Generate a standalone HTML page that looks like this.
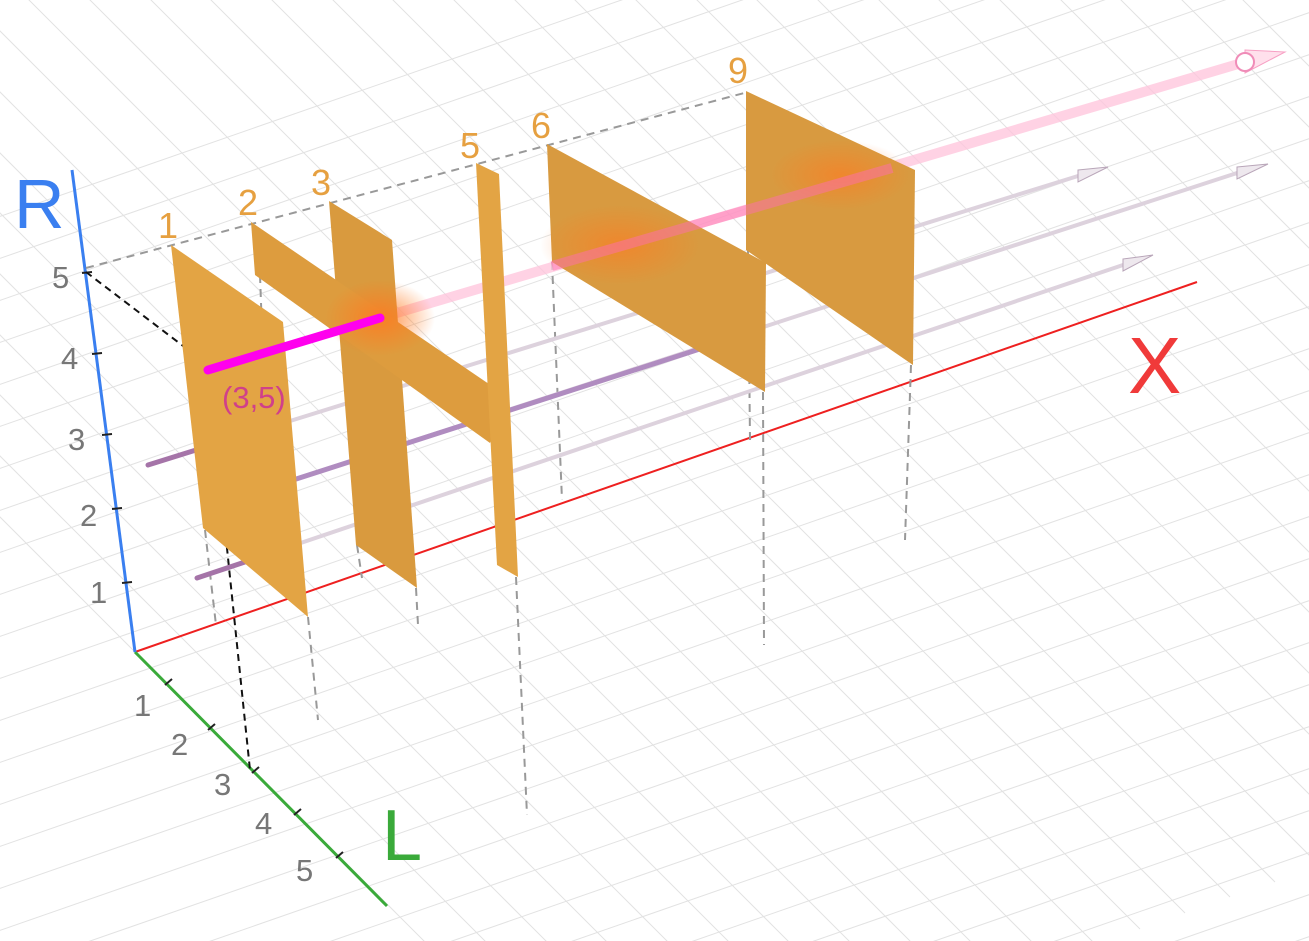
<!DOCTYPE html>
<html><head><style>html,body{margin:0;padding:0;background:#fff;overflow:hidden;width:1309px;height:941px}svg{display:block}</style></head>
<body>
<svg width="1309" height="941" viewBox="0 0 1309 941" xmlns="http://www.w3.org/2000/svg" font-family="'Liberation Sans', sans-serif">
<defs>
<radialGradient id="glow"><stop offset="0" stop-color="#ff7a20" stop-opacity="0.85"/><stop offset="1" stop-color="#ff7a20" stop-opacity="0"/></radialGradient>
</defs>
<rect width="1309" height="941" fill="#fff"/>
<g stroke="#e2e2e2" stroke-width="1" fill="none">
<path d="
M-200,580 L1400,23 M-200,622 L1400,65 M-200,664 L1400,107 M-200,706 L1400,149 M-200,748 L1400,191 M-200,790 L1400,233 M-200,832 L1400,275 M-200,874 L1400,317 M-200,916 L1400,359 M-200,958 L1400,401 M-200,1000 L1400,443 M-200,1042 L1400,485 M-200,1084 L1400,527 M-200,1126 L1400,569 M-200,1168 L1400,611 M-200,1210 L1400,653 M-200,1252 L1400,695 M-200,1294 L1400,737 M-200,1336 L1400,779 M-200,1378 L1400,821 M-200,1420 L1400,863 M-200,1462 L1400,905 M-200,1504 L1400,947
M-200,538 L1400,-19 M-200,496 L1400,-61 M-200,454 L1400,-103 M-200,412 L1400,-145 M-200,370 L1400,-187 M-200,328 L1400,-229 M-200,286 L1400,-271
"/>
<path d="
M-600,-83 L600,1117 M-555,-99 L645,1101 M-510,-115 L690,1085 M-465,-130 L735,1070 M-420,-146 L780,1054 M-375,-162 L825,1038 M-330,-177 L870,1023 M-285,-193 L915,1007 M-240,-209 L960,991 M-195,-224 L1005,976 M-150,-240 L1050,960 M-105,-256 L1095,944 M-60,-271 L1140,929 M-15,-287 L1185,913 M30,-303 L1230,897 M75,-318 L1275,882 M120,-334 L1320,866 M165,-350 L1365,850 M210,-365 L1410,835 M255,-381 L1455,819 M300,-397 L1500,803 M345,-412 L1545,788 M390,-428 L1590,772 M435,-444 L1635,756 M480,-459 L1680,741 M525,-475 L1725,725 M570,-491 L1770,709 M615,-506 L1815,694 M660,-522 L1860,678 M705,-538 L1905,662
"/>
</g>

<line x1="135" y1="652" x2="1197" y2="282" stroke="#ee2020" stroke-width="2"/>
<line x1="135" y1="652" x2="387" y2="906" stroke="#3aaa3a" stroke-width="3"/>
<line x1="135" y1="652" x2="72" y2="170" stroke="#3a7ff0" stroke-width="3"/>
<g stroke="#222" stroke-width="2">
<line x1="82" y1="273" x2="92" y2="272"/><line x1="92" y1="354" x2="102" y2="353"/><line x1="102" y1="435" x2="112" y2="434"/><line x1="112" y1="509" x2="122" y2="508"/><line x1="122" y1="583" x2="132" y2="582"/>
<line x1="165" y1="685" x2="172" y2="679"/><line x1="208" y1="730" x2="215" y2="724"/><line x1="252" y1="773" x2="259" y2="767"/><line x1="294" y1="815" x2="301" y2="809"/><line x1="336" y1="858" x2="343" y2="852"/>
</g>
<g fill="#777" font-size="31">
<text x="52" y="288">5</text><text x="61" y="369">4</text><text x="68" y="450">3</text><text x="80" y="526">2</text><text x="90" y="603">1</text>
<text x="134" y="716">1</text><text x="171" y="755">2</text><text x="214" y="795">3</text><text x="255" y="834">4</text><text x="296" y="881">5</text>
</g>
<text x="14" y="228" fill="#3a7ff0" font-size="70">R</text>
<text x="382" y="860" fill="#3aaa3a" font-size="72">L</text>
<text x="1128" y="393" fill="#f03a3a" font-size="80">X</text>

<path d="M86,268 L748,92" stroke="#999" stroke-width="2" stroke-dasharray="8,6" fill="none"/>
<path d="M86,272 L208,365 L250,770" stroke="#111" stroke-width="2" stroke-dasharray="7,5" fill="none"/>
<g stroke="#999" stroke-width="2" stroke-dasharray="8,6" fill="none">
<path d="M205,530 L216,625 M308,617 L318,720 M260,275 L262,330 M357,545 L362,578 M416,588 L418,625 M516,577 L527,815 M552,262 L562,500 M748,250 L750,440 M763,392 L764,645 M911,365 L905,540"/>
</g>

<g stroke-linecap="round">
<line x1="290" y1="421" x2="1078" y2="176" stroke="#ddd2dd" stroke-width="4"/>
<line x1="262" y1="490" x2="1237" y2="173" stroke="#ddd2dd" stroke-width="4"/>
<line x1="197" y1="578" x2="1123" y2="265" stroke="#ddd2dd" stroke-width="4"/>
<line x1="148" y1="465" x2="228" y2="440" stroke="#a574a8" stroke-width="5"/>
<line x1="197" y1="578" x2="278" y2="551" stroke="#a574a8" stroke-width="5"/>
<line x1="262" y1="490" x2="740" y2="336" stroke="#b08cc0" stroke-width="5"/>
</g>
<g fill="#eee8ee" stroke="#b9a6b9">
<polygon points="1078,170 1108,167 1078,182"/><polygon points="1237,167 1268,164 1237,179"/><polygon points="1123,259 1153,255 1123,271"/>
</g>

<line x1="380" y1="318" x2="1245" y2="62" stroke="#ffc4dc" stroke-width="10" opacity="0.75"/>
<polygon points="1245,50 1285,52 1245,73" fill="#ffe0ec" stroke="#f7a0c4"/>
<circle cx="1245" cy="62" r="9" fill="#fff" stroke="#f08cb8" stroke-width="2"/>

<g>
<polygon points="171,245 283,322 308,617 203,528" fill="#e3a444"/>
<polygon points="329,201 392,240 417,588 356,545" fill="#d99a3e"/>
<polygon points="251,222 508,397 490,443 255,275" fill="#dd9c3e"/>
<polygon points="476,163 499,174 518,577 497,565" fill="#e3a444"/>
<polygon points="547,144 766,263 765,392 552,262" fill="#d89a40"/>
<polygon points="746,91 915,170 913,365 746,250" fill="#d89a40"/>
</g>
<ellipse cx="380" cy="318" rx="55" ry="38" fill="url(#glow)"/>
<ellipse cx="620" cy="245" rx="80" ry="40" fill="url(#glow)" opacity="0.7"/>
<ellipse cx="840" cy="175" rx="70" ry="35" fill="url(#glow)" opacity="0.7"/>
<line x1="552" y1="266" x2="892" y2="168" stroke="#ff6fb0" stroke-width="10" opacity="0.5"/>
<line x1="208" y1="370" x2="380" y2="318" stroke="#ff00ee" stroke-width="9" stroke-linecap="round"/>

<text x="222" y="408" fill="#d0408a" font-size="31">(3,5)</text>
<g fill="#e6a040" font-size="36">
<text x="158" y="238">1</text><text x="238" y="215">2</text><text x="311" y="195">3</text><text x="460" y="158">5</text><text x="531" y="138">6</text><text x="728" y="83">9</text>
</g>
</svg>
</body></html>
